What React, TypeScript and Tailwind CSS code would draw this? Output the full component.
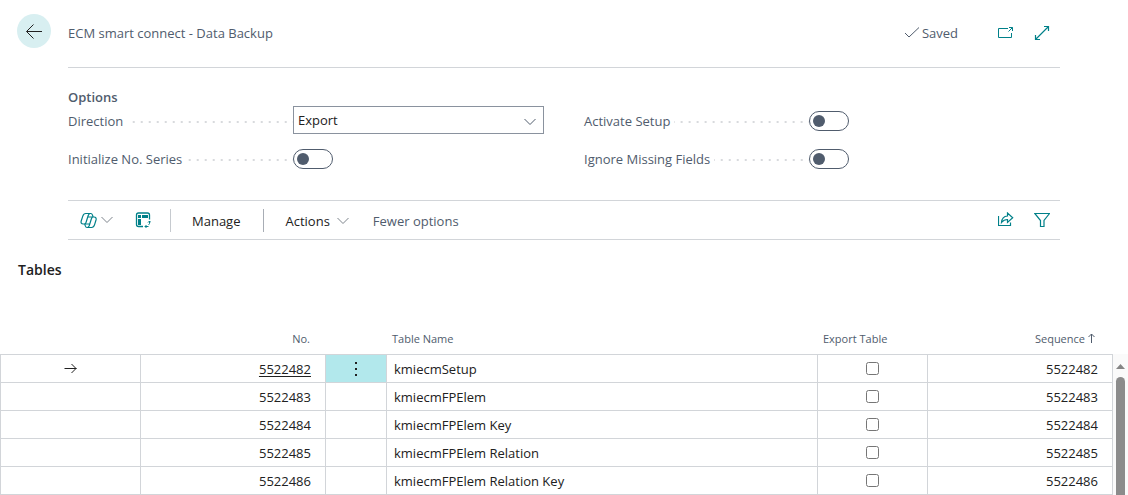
import { useId, useState } from 'react';
import type { ReactNode } from 'react';

const tables = [
  { no: 5522482, name: 'kmiecmSetup' },
  { no: 5522483, name: 'kmiecmFPElem' },
  { no: 5522484, name: 'kmiecmFPElem Key' },
  { no: 5522485, name: 'kmiecmFPElem Relation' },
  { no: 5522486, name: 'kmiecmFPElem Relation Key' },
];

function Icon({ size = 16, className = '', children }: { size?: number; className?: string; children: ReactNode }) {
  return (
    <svg
      width={size}
      height={size}
      viewBox={`0 0 ${size} ${size}`}
      fill="none"
      stroke="currentColor"
      className={`shrink-0 ${className}`}
      aria-hidden="true"
    >
      {children}
    </svg>
  );
}

function Chevron({ className = '' }: { className?: string }) {
  return (
    <svg width="12" height="8" viewBox="0 0 12 8" fill="none" stroke="currentColor" className={`shrink-0 ${className}`} aria-hidden="true">
      <path d="M.5 1 6 6.5 11.5 1" />
    </svg>
  );
}

function Field({ label, id, children }: { label: string; id: string; children: ReactNode }) {
  return (
    <div className="flex h-[30px]">
      <div className="flex w-[225px] shrink-0 items-center">
        <label htmlFor={id} className="pr-1 whitespace-nowrap">{label}</label>
        <span className="mt-[2px] h-[2px] flex-1 bg-[linear-gradient(to_right,#d8dadd_2px,transparent_2px)] bg-[length:8px_2px] bg-right" />
      </div>
      {children}
    </div>
  );
}

function ToggleField({ label }: { label: string }) {
  const id = useId();
  const [on, setOn] = useState(false);
  return (
    <Field label={label} id={id}>
      <input
        id={id}
        type="checkbox"
        role="switch"
        checked={on}
        onChange={() => setOn(!on)}
        className="flex h-5 w-10 appearance-none items-center self-center rounded-full border border-[#505c6d] px-[3px] before:size-3 before:rounded-full before:bg-[#505c6d] checked:justify-end"
      />
    </Field>
  );
}

function SelectField({ label }: { label: string }) {
  const id = useId();
  return (
    <Field label={label} id={id}>
      <div className="relative h-7 flex-1">
        <select id={id} defaultValue="Export" className="h-full w-full appearance-none border border-[#8a929e] bg-white px-1 text-[#212121]">
          <option>Export</option>
          <option>Import</option>
        </select>
        <Chevron className="pointer-events-none absolute top-3 right-2 text-[#505c6d]" />
      </div>
    </Field>
  );
}

function TableRow({ no, name, current }: { no: number; name: string; current: boolean }) {
  const cell = 'h-7 border-r border-b border-[#d2d5d9] p-0';
  return (
    <tr>
      <td className={`${cell} border-l`}>
        {current && (
          <Icon className="mx-auto">
            <path d="M1.500 7.500h12M8.500 3 13 7.500 8.500 12" />
          </Icon>
        )}
      </td>
      <td className={`${cell} pr-[14px] text-right`}>
        {current ? <a href="#record" className="underline underline-offset-2">{no}</a> : no}
      </td>
      <td className={`${cell} ${current ? 'bg-[#b2e8ec]' : ''}`}>
        {current && (
          <button className="flex h-[27px] w-full items-center justify-center" aria-label="Show more options">
            <svg width="2" height="14" fill="currentColor" aria-hidden="true">
              <path d="M0 0h2v2H0zM0 6h2v2H0zM0 12h2v2H0z" />
            </svg>
          </button>
        )}
      </td>
      <td className={`${cell} pl-[7px]`}>{name}</td>
      <td className={cell}>
        <input type="checkbox" aria-label={`Export ${name}`} className="mx-auto block size-[13px]" />
      </td>
      <td className={`${cell} pr-[14px] text-right`}>{no}</td>
    </tr>
  );
}

export default function App() {
  return (
    <div className="bg-white font-['Open_Sans',sans-serif] text-[13px] leading-5 text-[#505c6d]">
      <header className="flex pt-[14px] pr-[68px] pl-[17px]">
        <button className="mr-[17px] flex size-[34px] items-center justify-center rounded-full bg-[#d8eff1] text-[#212121]" aria-label="Back">
          <Icon>
            <path d="M16 8.500H.8M7.500 1.500l-7 7 7 7" />
          </Icon>
        </button>
        <div className="flex h-[54px] flex-1 items-center border-b border-[#d2d5d9] pb-4">
          <h1 className="flex-1">ECM smart connect - Data Backup</h1>
          <span className="mr-10 flex items-center gap-[2px]">
            <Icon>
              <path d="M1 8l4 4 10-9.500" />
            </Icon>
            Saved
          </span>
          <button className="mr-5 text-[#008089]" aria-label="Open in new window">
            <Icon>
              <path d="M10 3.500H.5v9h13V8M10.500 6.500l4-4M11 2.500h3.500V6" />
            </Icon>
          </button>
          <button className="mr-[10px] text-[#008089]" aria-label="Expand">
            <Icon>
              <path strokeWidth="1.200" d="M1.500 14.500l13-13M10 1.500h4.500V6M1.500 10v4.500H6" />
            </Icon>
          </button>
        </div>
      </header>

      <main>
        <section className="mx-[68px]">
          <h2 className="pt-5 leading-[18px] font-semibold">Options</h2>
          <div className="grid grid-cols-2 gap-x-10 gap-y-2 pb-[26px]">
            <SelectField label="Direction" />
            <ToggleField label="Activate Setup" />
            <ToggleField label="Initialize No. Series" />
            <ToggleField label="Ignore Missing Fields" />
          </div>
        </section>

        <div className="mx-[68px] flex h-10 items-center border-y border-[#d2d5d9] pl-3 text-[#212121]">
          <button className="flex items-center gap-1" aria-label="Copilot">
            <Icon size={17} className="text-[#008089]">
              <path
                strokeWidth="1.200"
                d="M5.800 1.500h5c1 0 1.400.7 1.700 1.600l.6 1.900h.9c1.800 0 2.500 1.200 2 3l-1.400 4.600c-.6 1.900-1.300 2.900-3 2.900H7c-1 0-1.400-.7-1.700-1.600L4.700 12h-1.500c-1.800 0-2.500-1.200-2-3l1.500-4.600C3.300 2.500 4 1.500 5.800 1.500zM10.300 1.500c-1.300 0-1.700.8-2.100 2L6.100 10.300c-.4 1.200-.8 1.700-1.900 1.700M7.200 15.500c1.200 0 1.700-.8 2.100-2l2.100-6.800c.4-1.200.8-1.700 1.900-1.700M7.800 5h5M5 12h4.700"
              />
            </Icon>
            <Chevron className="text-[#7d838b]" />
          </button>
          <button className="ml-[22px] text-[#008089]" aria-label="Edit list">
            <Icon>
              <path strokeWidth="1.300" d="M14.500 7.500V3c0-1.400-.6-2-2-2h-9c-1.400 0-2 .6-2 2v9.500c0 1.400.6 2 2 2H8" />
              <path fill="currentColor" stroke="none" d="M3 3h3v3H3zM7 3h6v3H7zM3 7h3v6H3z" />
              <path d="M14.500 9v2.500c0 .7-.3 1-1 1M13 10.500 14.500 9l1.500 1.500M13.500 14.500H10M11.500 13 10 14.500l1.500 1.500" />
            </Icon>
          </button>
          <span className="ml-[19px] h-[23px] w-px bg-[#c6cacf]" />
          <button className="ml-[21px] pt-px">Manage</button>
          <span className="ml-[23px] h-[23px] w-px bg-[#a8adb5]" />
          <button className="ml-[21px] flex items-center gap-[7px] pt-px">
            Actions
            <Chevron className="text-[#7d838b]" />
          </button>
          <button className="ml-6 pt-px text-[#505c6d]">Fewer options</button>
          <div className="mr-[10px] ml-auto flex gap-5 text-[#008089]">
            <button aria-label="Share">
              <Icon>
                <path strokeWidth="1.200" d="M.5 4v9.500h12v-3M9.500 1v3C5.500 4.300 3.800 6.500 3.500 10.500 5.200 8.300 7 7.500 9.500 7.500v3l5.200-4.800z" />
              </Icon>
            </button>
            <button aria-label="Filter">
              <Icon>
                <path strokeWidth="1.200" d="M.8 1.500h14.700L10 8.500v6H6.500v-6z" />
              </Icon>
            </button>
          </div>
        </div>

        <h2 className="pt-5 pl-[18px] text-[14px] font-semibold text-[#212121]">Tables</h2>

        <div className="flex pt-[43px]">
          <table className="flex-1 table-fixed border-separate border-spacing-0 text-[#212121]">
            <colgroup>
              <col className="w-[141px]" />
              <col className="w-[185px]" />
              <col className="w-[61px]" />
              <col />
              <col className="w-[110px]" />
              <col className="w-[185px]" />
            </colgroup>
            <thead>
              <tr className="text-[11px] text-[#505c6d] [&>*]:h-8 [&>*]:border-b [&>*]:border-[#d2d5d9] [&>*]:p-0 [&>*]:font-normal">
                <td />
                <th scope="col"><span className="block pr-4 text-right">No.</span></th>
                <td />
                <th scope="col"><span className="block pl-[5px] text-left">Table Name</span></th>
                <th scope="col"><span className="block pl-[5px] text-left">Export Table</span></th>
                <th scope="col" aria-sort="ascending">
                  <span className="flex items-center justify-end gap-[3px] pr-[18px]">
                    Sequence
                    <svg width="7" height="11" fill="none" stroke="currentColor" aria-hidden="true">
                      <path d="M3.500 10V1M.5 4l3-3 3 3" />
                    </svg>
                  </span>
                </th>
              </tr>
            </thead>
            <tbody>
              {tables.map((row, i) => (
                <TableRow key={row.no} no={row.no} name={row.name} current={i === 0} />
              ))}
            </tbody>
          </table>

          {/* scrollbar */}
          <div className="mt-[31px] flex w-[15px] flex-col items-center bg-[#fafafa] pt-[10px]">
            <svg width="9" height="5" fill="#858585" aria-hidden="true">
              <path d="M4.500 0 9 5H0z" />
            </svg>
            <div className="mt-2 w-[9px] flex-1 rounded-t-full bg-[#8b8b8b]" />
          </div>
        </div>
      </main>
    </div>
  );
}
